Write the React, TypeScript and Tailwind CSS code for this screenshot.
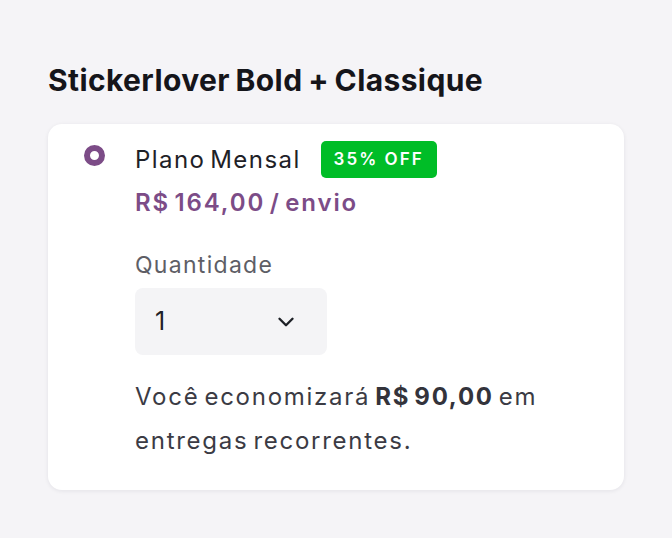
import { ChevronDown } from 'lucide-react'

export default function App() {
  return (
    <div
      className="min-h-[538px] w-[672px] bg-[#f5f4f7] px-12 pt-[60px] pb-12"
      style={{ fontFamily: 'Inter, "Noto Sans", sans-serif' }}
    >
      <h1 className="text-[30px] leading-[40px] font-bold tracking-[0.013em] [word-spacing:-0.06em] text-[#15151a]">
        Stickerlover Bold + Classique
      </h1>

      <div className="mt-[24px] rounded-[14px] bg-white pl-9 pr-9 pt-[17px] pb-[27px] shadow-[0_1px_4px_rgba(30,20,50,0.08)]">
        <div className="flex gap-[30px]">
          <div className="mt-[4px] h-[21px] w-[21px] flex-shrink-0 rounded-full border-[6.5px] border-[#7c4c87] bg-white" />
          <div className="flex-1">
            <div className="flex items-center gap-[20px]">
              <span className="text-[24px] leading-[37px] tracking-[0.06em] [word-spacing:-0.14em] text-[#1e2127]">
                Plano Mensal
              </span>
              <span className="flex h-[37px] w-[116px] items-center justify-center rounded-[5px] bg-[#00bd27] text-[17px] font-semibold tracking-[0.12em] text-white">
                35% OFF
              </span>
            </div>
            <div className="mt-[9px] text-[24px] leading-[32px] font-semibold tracking-[0.078em] [word-spacing:-0.14em] text-[#7c4c87]">
              R$ 164,00 / envio
            </div>

            <div className="mt-[31px] text-[23px] leading-[30px] tracking-[0.056em] text-[#5e5e66]">Quantidade</div>
            <button
              type="button"
              className="mt-[8px] flex h-[67px] w-[192px] items-center justify-between rounded-[8px] bg-[#f4f4f6] pl-[20px] pr-[28px] text-[#1e2127]"
            >
              <span className="text-[25px]">1</span>
              <ChevronDown size={26} strokeWidth={2.2} />
            </button>

            <p className="mt-[20px] max-w-[430px] text-[24px] leading-[44px] tracking-[0.072em] [word-spacing:-0.14em] text-[#3b3b44]">
              Você economizará <span className="font-bold text-[#33333b]">R$ 90,00</span> em entregas recorrentes.
            </p>
          </div>
        </div>
      </div>
    </div>
  )
}
